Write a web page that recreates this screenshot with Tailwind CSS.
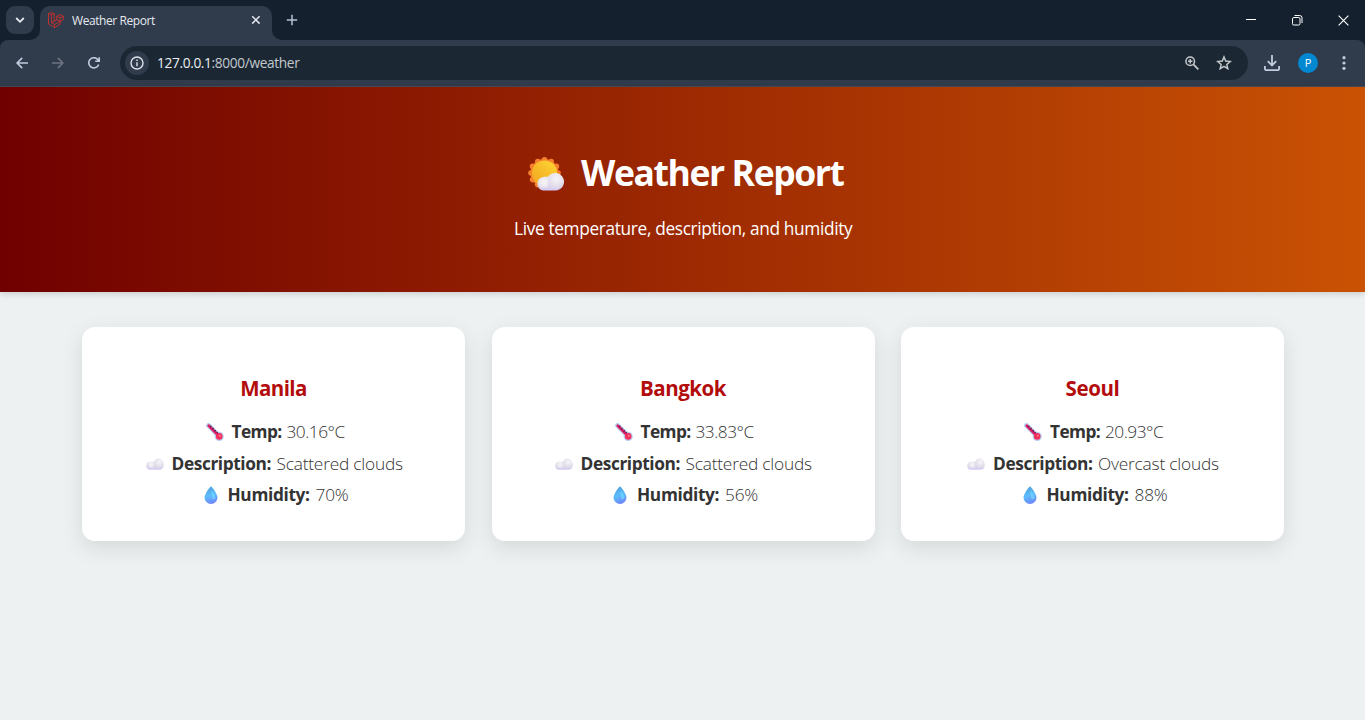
<!DOCTYPE html>
<html lang="en">
<head>
<meta charset="utf-8">
<title>Weather Report</title>
<script src="https://cdn.jsdelivr.net/npm/@tailwindcss/browser@4"></script>
</head>
<body class="w-[1365px] h-[720px] overflow-hidden flex flex-col bg-[#edf1f2] text-[#333] font-['Open_Sans','Noto_Sans',sans-serif]">

<!-- Shared symbols -->
<svg width="0" height="0" class="absolute" aria-hidden="true">
  <defs>
    <linearGradient id="thermG" x1="0" y1="0" x2="1" y2="1"><stop offset="0" stop-color="#a01c78"/><stop offset="1" stop-color="#f8305a"/></linearGradient>
    <linearGradient id="dropG" x1="0.3" y1="0" x2="0.6" y2="1"><stop offset="0" stop-color="#4f9fd8"/><stop offset=".5" stop-color="#5cbcfb"/><stop offset="1" stop-color="#6f83fa"/></linearGradient>
    <linearGradient id="cloudG" x1="0" y1="0" x2="0" y2="1"><stop offset="0" stop-color="#efedf2"/><stop offset=".6" stop-color="#e0dde8"/><stop offset="1" stop-color="#d5c9f3"/></linearGradient>
    <radialGradient id="puffG" cx=".6" cy=".35" r=".7"><stop offset="0" stop-color="#f7f5f8"/><stop offset="1" stop-color="#dbd6e6"/></radialGradient>
    <radialGradient id="puffS" cx=".5" cy=".4" r=".6"><stop offset="0" stop-color="#f7f5f8"/><stop offset="1" stop-color="#e6e2ed"/></radialGradient>
    <linearGradient id="sunG" x1="1" y1="0" x2="0" y2="1"><stop offset="0" stop-color="#fdd835"/><stop offset="1" stop-color="#f2a31f"/></linearGradient>
    <symbol id="therm" viewBox="0 0 18 18">
      <path d="M2.6 2.6 13 13" stroke="#b4d3f4" stroke-width="5" stroke-linecap="round"/>
      <circle cx="13.200" cy="13.400" r="4.600" fill="#b4d3f4"/>
      <path d="M2.8 2.8 13 13" stroke="#e01d62" stroke-width="2.800" stroke-linecap="round"/>
      <circle cx="13.200" cy="13.400" r="3.300" fill="#f2315d"/>
      <circle cx="13.800" cy="12.700" r="1" fill="#ff7990"/>
      <path d="m5.400 2.800-1.300 1.300M7.600 5l-1.300 1.300M9.800 7.200 8.500 8.500M11.800 9.200l-1 1" stroke="#4b2458" stroke-width="1.200"/>
    </symbol>
    <symbol id="cloud" viewBox="0 0 18 12">
      <path d="M4.3 11.700a4 4 0 0 1-.2-8 4.500 4.500 0 0 1 3.500.3 5.600 5.600 0 0 1 10.200 2.700c.2 2.800-1.700 5-4.400 5z" fill="url(#cloudG)"/>
      <circle cx="12.500" cy="5.300" r="4.700" fill="url(#puffG)"/>
      <circle cx="5.200" cy="7" r="3" fill="url(#puffS)"/>
    </symbol>
    <symbol id="drop" viewBox="0 0 14 18">
      <path d="M7 .4C8 .4 13.500 8 13.500 11.600a6.500 6.300 0 0 1-13 0C.5 8 6 .4 7 .4z" fill="url(#dropG)"/>
      <path d="M7.500 4.500c2.400 2.600 4.400 5 4 7.500-.4 1.800-3.200 1.600-3.600 0z" fill="#6fd6ff" opacity=".75"/>
    </symbol>
  </defs>
</svg>

<!-- Tab strip -->
<div class="h-10 shrink-0 bg-[#15202e] flex items-start">
  <button class="w-7 h-7 ml-1.5 mt-1.5 rounded-[9px] bg-[#303b4b] flex items-center justify-center">
    <svg width="10" height="8" viewBox="0 0 10 8" fill="none" stroke="#e4e9f0" stroke-width="1.800"><path d="M1.200 2 5 5.800 8.800 2"/></svg>
  </button>
  <div class="flex items-end h-10 -ml-1">
    <svg width="10" height="10" viewBox="0 0 10 10" fill="#303b4b"><path d="M10 0v10H0A10 10 0 0 0 10 0z"/></svg>
    <div class="w-[232px] h-[34px] rounded-t-[10px] bg-[#303b4b] flex items-start">
      <svg class="ml-2 mt-[6px]" width="16" height="16" viewBox="0 0 16 16" fill="none" stroke="#d5302c" stroke-width=".85" stroke-linejoin="round"><path d="M.5 1.500 3.400.4 6.200 1.500V9.300L8.800 7.800V4.200L12 2.500 15.300 4.200V7.700L12.200 9.500V12.300L6.600 15.500.5 12.100zM.5 1.500 3.400 2.800 6.200 1.500M3.400 2.800V10.700L6.600 12.500M6.600 15.500V12.500L12.200 9.500M3.400 10.700 6.200 9.300M8.800 4.200 12 6 15.300 4.200M12 6V9.500M8.800 7.800 12.200 9.500"/></svg>
      <span class="ml-2 mt-[7px] w-[84px] text-[12px] leading-4 tracking-[-0.420px] whitespace-nowrap text-[#e6eaf0]">Weather Report</span>
      <svg class="ml-[95px] mt-[9px]" width="10" height="10" viewBox="0 0 10 10" stroke="#e4e9f0" stroke-width="1.500"><path d="M1.200 1.200l7.400 7.400M8.600 1.200 1.200 8.600"/></svg>
    </div>
    <svg width="10" height="10" viewBox="0 0 10 10" fill="#303b4b"><path d="M0 0v10h10A10 10 0 0 1 0 0z"/></svg>
  </div>
  <svg class="ml-[4px] mt-[14px]" width="12" height="12" viewBox="0 0 12 12" stroke="#b5c2d6" stroke-width="1.500"><path d="M6 .8v10.400M.8 6h10.400"/></svg>
  <div class="ml-auto mt-[14px] flex items-center h-3">
    <svg width="10" height="10" viewBox="0 0 10 10" stroke="#fff"><path d="M0 4.500h10"/></svg>
    <svg class="ml-9" width="11" height="11" viewBox="0 0 11 11" fill="none" stroke="#fff"><rect x=".5" y="2.500" width="7.500" height="7.500" rx="1.300"/><path d="M2.500.5h5.200a2.300 2.300 0 0 1 2.300 2.300V8"/></svg>
    <svg class="ml-[35px] mr-4" width="11" height="11" viewBox="0 0 11 11" stroke="#fff" stroke-width="1.100"><path d="M.6.6l9.800 9.800M10.400.6.6 10.400"/></svg>
  </div>
</div>

<!-- Toolbar -->
<div class="bg-[#15202e] shrink-0">
<div class="h-[47px] bg-[#303b4b] rounded-t-lg border-b border-[#454c55] flex items-center">
  <svg class="ml-4" width="12" height="12" viewBox="0 0 12 12" fill="none" stroke="#c0cde0" stroke-width="1.600"><path d="M12 6H1.200M6.200.9 1.100 6l5.100 5.100"/></svg>
  <svg class="ml-6" width="12" height="12" viewBox="0 0 12 12" fill="none" stroke="#6c7482" stroke-width="1.600"><path d="M0 6h10.800M5.800.9 10.900 6l-5.100 5.100"/></svg>
  <svg class="ml-6" width="12" height="12" viewBox="0 0 12 12" fill="none" stroke="#c0cde0" stroke-width="1.600"><path d="M10.700 7.400A5.100 5.100 0 1 1 9.900 2.700L11 4M11.200.2V4.200H7.200"/></svg>
  <div class="ml-5 w-[1128px] h-[34px] rounded-full bg-[#1b2834] flex items-center">
    <div class="ml-[5px] w-6 h-6 rounded-full bg-[#303b4b] flex items-center justify-center">
      <svg width="14" height="14" viewBox="0 0 14 14" fill="none" stroke="#dce2ea" stroke-width="1.400"><circle cx="7" cy="7" r="6"/><path d="M7 6.200v4M7 3.600v1.500"/></svg>
    </div>
    <span class="ml-2 text-[13.700px] leading-5 tracking-[-0.350px] whitespace-nowrap text-[#c3c8ce]"><span class="text-[#eceff2]">127.0.0.1</span>:8000/weather</span>
    <svg class="ml-auto" width="14" height="14" viewBox="0 0 14 14" fill="none" stroke="#c4c7ca" stroke-width="1.500"><circle cx="5.200" cy="5.200" r="4.300"/><path d="M8.400 8.400 13.300 13.300" stroke-width="1.800"/><path d="M5.200 3v4.400M3 5.200h4.400" stroke-width="1.500"/></svg>
    <svg class="ml-[17px] mr-4" width="16" height="16" viewBox="0 0 16 16" fill="none" stroke="#c4c7ca" stroke-width="1.500"><path d="M8 2 9.700 6.100 14.200 6.500 10.800 9.400 11.800 13.700 8 11.400 4.200 13.700 5.200 9.400 1.800 6.500 6.300 6.100z"/></svg>
  </div>
  <svg class="ml-4" width="16" height="16" viewBox="0 0 16 16" fill="none" stroke="#c0cde0" stroke-width="1.800"><path d="M8 0v10M3.800 6.200 8 10.400l4.200-4.200M.9 11v2.800q0 1.300 1.300 1.300h11.600q1.300 0 1.300-1.300V11"/></svg>
  <div class="ml-[18px] w-5 h-5 rounded-full bg-[#0288d1] text-white text-[11px] leading-5 text-center">P</div>
  <svg class="ml-6" width="4" height="14" viewBox="0 0 4 14" fill="#c0cde0"><circle cx="2" cy="1.700" r="1.600"/><circle cx="2" cy="7" r="1.600"/><circle cx="2" cy="12.300" r="1.600"/></svg>
</div>
</div>

<!-- Hero -->
<header class="h-[205px] shrink-0 bg-[linear-gradient(to_right,#700000,#c95204)] shadow-[0_2px_6px_rgba(0,0,0,0.15)] flex flex-col items-center">
  <h1 class="mt-[60px] h-[50px] w-[315px] ml-[6px] flex items-center text-white font-bold text-[35.500px] leading-[50px] tracking-[-1.400px] whitespace-nowrap">
    <svg class="shrink-0 mt-[3px]" width="36" height="34" viewBox="0 0 36 34">
      <g fill="#f5812c"><circle cx="16.500" cy="16" r="14"/><circle cx="16.500" cy="2.800" r="2.800"/><circle cx="23.200" cy="4.500" r="2.800"/><circle cx="28.400" cy="9.400" r="2.800"/><circle cx="30" cy="16" r="2.800"/><circle cx="9.800" cy="4.500" r="2.800"/><circle cx="4.600" cy="9.400" r="2.800"/><circle cx="3" cy="16" r="2.800"/><circle cx="4.600" cy="22.600" r="2.800"/><circle cx="9.600" cy="27.600" r="2.800"/></g>
      <circle cx="16.500" cy="16" r="12.600" fill="url(#sunG)"/>
      <path d="M15.500 33.500a6.800 6.800 0 0 1-.4-13.500 7 7 0 0 1 4.700 0 8.800 8.800 0 1 1 7.500 13.500z" fill="url(#cloudG)"/>
      <circle cx="27" cy="24" r="7.300" fill="url(#puffG)"/><circle cx="16" cy="26" r="5" fill="url(#puffS)"/>
    </svg>
    <span class="ml-[17px]">Weather Report</span>
  </h1>
  <p class="mt-[20px] w-[338px] ml-px text-white text-[17.300px] leading-6 tracking-[-0.350px] whitespace-nowrap">Live temperature, description, and humidity</p>
</header>

<!-- City cards -->
<main class="mt-[35px] ml-[82px] w-[1202px] grid grid-cols-3 gap-[26.500px] text-[17.300px] leading-8">
  <section class="h-[214px] rounded-[13px] bg-white shadow-[0_7px_22px_rgba(0,0,0,0.1)] flex flex-col items-center pt-[45px]">
    <h2 class="h-8 text-[20.500px] font-bold tracking-[-0.600px] text-[#b30c0c]">Manila</h2>
    <p class="mt-3 ml-[5px] h-8 flex items-center whitespace-nowrap"><svg class="mr-2" width="18" height="18"><use href="#therm"/></svg><b class="w-[50px] mr-[5px] tracking-[-0.600px]">Temp:</b><span class="w-[60px] font-[350] tracking-[-0.500px]">30.16°C</span></p>
    <p class="ml-1 h-[31px] flex items-center whitespace-nowrap"><svg class="mr-2" width="18" height="12"><use href="#cloud"/></svg><b class="w-[100px] mr-[5px] tracking-[-0.400px]">Description:</b><span class="w-[129px] font-[350] tracking-[-0.200px]">Scattered clouds</span></p>
    <p class="ml-[6px] h-8 flex items-center whitespace-nowrap"><svg class="mr-[10px]" width="14" height="18"><use href="#drop"/></svg><b class="w-[83px] mr-[5px] tracking-[-0.350px]">Humidity:</b><span class="w-[34px] font-[350] tracking-[-0.200px]">70%</span></p>
  </section>
  <section class="h-[214px] rounded-[13px] bg-white shadow-[0_7px_22px_rgba(0,0,0,0.1)] flex flex-col items-center pt-[45px]">
    <h2 class="h-8 text-[20.500px] font-bold tracking-[-0.500px] text-[#b30c0c]">Bangkok</h2>
    <p class="mt-3 ml-1 h-8 flex items-center whitespace-nowrap"><svg class="mr-2" width="18" height="18"><use href="#therm"/></svg><b class="w-[50px] mr-[5px] tracking-[-0.600px]">Temp:</b><span class="w-[60px] font-[350] tracking-[-0.500px]">33.83°C</span></p>
    <p class="ml-[3px] h-[31px] flex items-center whitespace-nowrap"><svg class="mr-2" width="18" height="12"><use href="#cloud"/></svg><b class="w-[100px] mr-[5px] tracking-[-0.400px]">Description:</b><span class="w-[129px] font-[350] tracking-[-0.200px]">Scattered clouds</span></p>
    <p class="ml-[6px] h-8 flex items-center whitespace-nowrap"><svg class="mr-[10px]" width="14" height="18"><use href="#drop"/></svg><b class="w-[83px] mr-[5px] tracking-[-0.350px]">Humidity:</b><span class="w-[34px] font-[350] tracking-[-0.200px]">56%</span></p>
  </section>
  <section class="h-[214px] rounded-[13px] bg-white shadow-[0_7px_22px_rgba(0,0,0,0.1)] flex flex-col items-center pt-[45px]">
    <h2 class="h-8 text-[20.500px] font-bold tracking-[-0.400px] text-[#b30c0c]">Seoul</h2>
    <p class="mt-3 ml-1 h-8 flex items-center whitespace-nowrap"><svg class="mr-2" width="18" height="18"><use href="#therm"/></svg><b class="w-[50px] mr-[5px] tracking-[-0.600px]">Temp:</b><span class="w-[60px] font-[350] tracking-[-0.500px]">20.93°C</span></p>
    <p class="ml-1 h-[31px] flex items-center whitespace-nowrap"><svg class="mr-2" width="18" height="12"><use href="#cloud"/></svg><b class="w-[100px] mr-[5px] tracking-[-0.400px]">Description:</b><span class="w-[124px] font-[350] tracking-[-0.200px]">Overcast clouds</span></p>
    <p class="ml-[6px] h-8 flex items-center whitespace-nowrap"><svg class="mr-[10px]" width="14" height="18"><use href="#drop"/></svg><b class="w-[83px] mr-[5px] tracking-[-0.350px]">Humidity:</b><span class="w-[34px] font-[350] tracking-[-0.200px]">88%</span></p>
  </section>
</main>
</body>
</html>
